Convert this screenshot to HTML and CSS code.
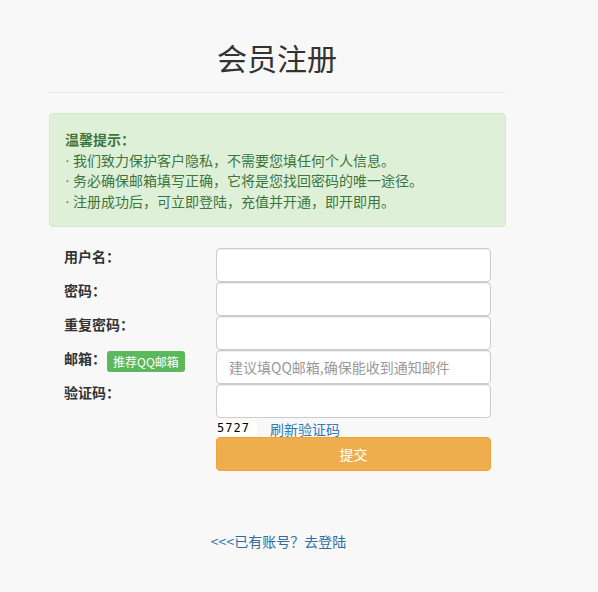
FILE: index.html
```html
<!DOCTYPE html>
<html lang="zh">
<head>
<meta charset="utf-8">
<title>会员注册</title>
<link rel="stylesheet" href="styles.css">
</head>
<body>
<div class="container">
  <h1 class="title">会员注册</h1>
  <hr class="divider">
  <div class="alert">
    <div class="alert-line alert-title">温馨提示：</div>
    <div class="alert-line"><span class="dot">·</span>我们致力保护客户隐私，不需要您填任何个人信息。</div>
    <div class="alert-line"><span class="dot">·</span>务必确保邮箱填写正确，它将是您找回密码的唯一途径。</div>
    <div class="alert-line"><span class="dot">·</span>注册成功后，可立即登陆，充值并开通，即开即用。</div>
  </div>
  <form class="form">
    <label class="label">用户名：</label>
    <input class="input" type="text">
    <label class="label">密码：</label>
    <input class="input" type="password">
    <label class="label">重复密码：</label>
    <input class="input" type="password">
    <label class="label">邮箱：<span class="badge">推荐QQ邮箱</span></label>
    <input class="input" type="text" placeholder="建议填QQ邮箱,确保能收到通知邮件">
    <label class="label">验证码：</label>
    <input class="input" type="text">
    <div></div>
    <div class="captcha-row"><span class="captcha">5727</span><a class="refresh" href="#">刷新验证码</a></div>
    <div></div>
    <button class="submit" type="button">提交</button>
  </form>
  <div class="footer-link"><a href="#">&lt;&lt;&lt;已有账号？去登陆</a></div>
</div>
</body>
</html>
```
FILE: styles.css
```css
html, body {
  margin: 0;
  padding: 0;
  background: #f8f8f8;
}
body {
  font-family: "Noto Sans CJK SC", "Liberation Sans", sans-serif;
  font-size: 14px;
  color: #333;
}
.container {
  width: 458px;
  margin-left: 48px;
  padding-top: 40px;
}
.title {
  margin: 0;
  text-align: center;
  font-size: 30px;
  font-weight: 400;
  line-height: 34px;
  color: #333;
}
.divider {
  border: 0;
  border-top: 1px solid #eaeaea;
  margin: 18px 0 20px;
}
.alert {
  background: #dff0d8;
  border: 1px solid #d6e9c6;
  border-radius: 4px;
  color: #3c763d;
  padding: 15px 15px;
  margin-left: 1px;
}
.alert-line {
  height: 20.5px;
  line-height: 20.5px;
  display: flex;
  align-items: center;
}
.alert-title {
  font-weight: 700;
}
.dot {
  width: 8px;
  flex: none;
  font-family: "Liberation Sans", sans-serif;
}
.form {
  display: grid;
  grid-template-columns: 152px 275px;
  grid-auto-rows: auto;
  margin-top: 21px;
  padding-left: 16px;
}
.label {
  font-weight: 700;
  line-height: 20px;
  height: 34px;
  box-sizing: border-box;
  display: flex;
  align-items: flex-start;
  position: relative;
  top: -2px;
}
.badge {
  display: inline-block;
  background: #5cb85c;
  color: #fff;
  font-size: 12px;
  font-weight: 400;
  line-height: 21px;
  padding: 0 6px;
  border-radius: 3px;
  margin-top: 3px;
  margin-left: 1px;
}
.input {
  display: block;
  box-sizing: border-box;
  width: 275px;
  height: 34px;
  margin: 0;
  border: 1px solid #ccc;
  border-radius: 4px;
  background: #fff;
  padding: 0 12px;
  font-family: inherit;
  font-size: 14px;
  color: #555;
  box-shadow: inset 0 1px 1px rgba(0,0,0,0.075);
}
.input::placeholder {
  color: #999;
}
.captcha-row {
  display: flex;
  align-items: center;
  height: 17px;
  margin-top: 2px;
}
.captcha {
  display: inline-block;
  width: 40px;
  height: 15px;
  background: #fff;
  font-family: "DejaVu Sans Mono", monospace;
  font-size: 12px;
  line-height: 15px;
  letter-spacing: 1px;
  color: #000;
  padding-left: 1px;
}
.refresh {
  color: #337ab7;
  text-decoration: none;
  margin-left: 13px;
}
.submit {
  display: block;
  width: 275px;
  height: 34px;
  margin-top: 0;
  border: 1px solid #eea236;
  border-radius: 4px;
  background: #f0ad4e;
  color: #fff;
  font-family: inherit;
  font-size: 14px;
}
.footer-link {
  text-align: center;
  margin-top: 60px;
  padding-left: 3px;
}
.footer-link a {
  color: #2f6c9f;
  text-decoration: none;
}
```
